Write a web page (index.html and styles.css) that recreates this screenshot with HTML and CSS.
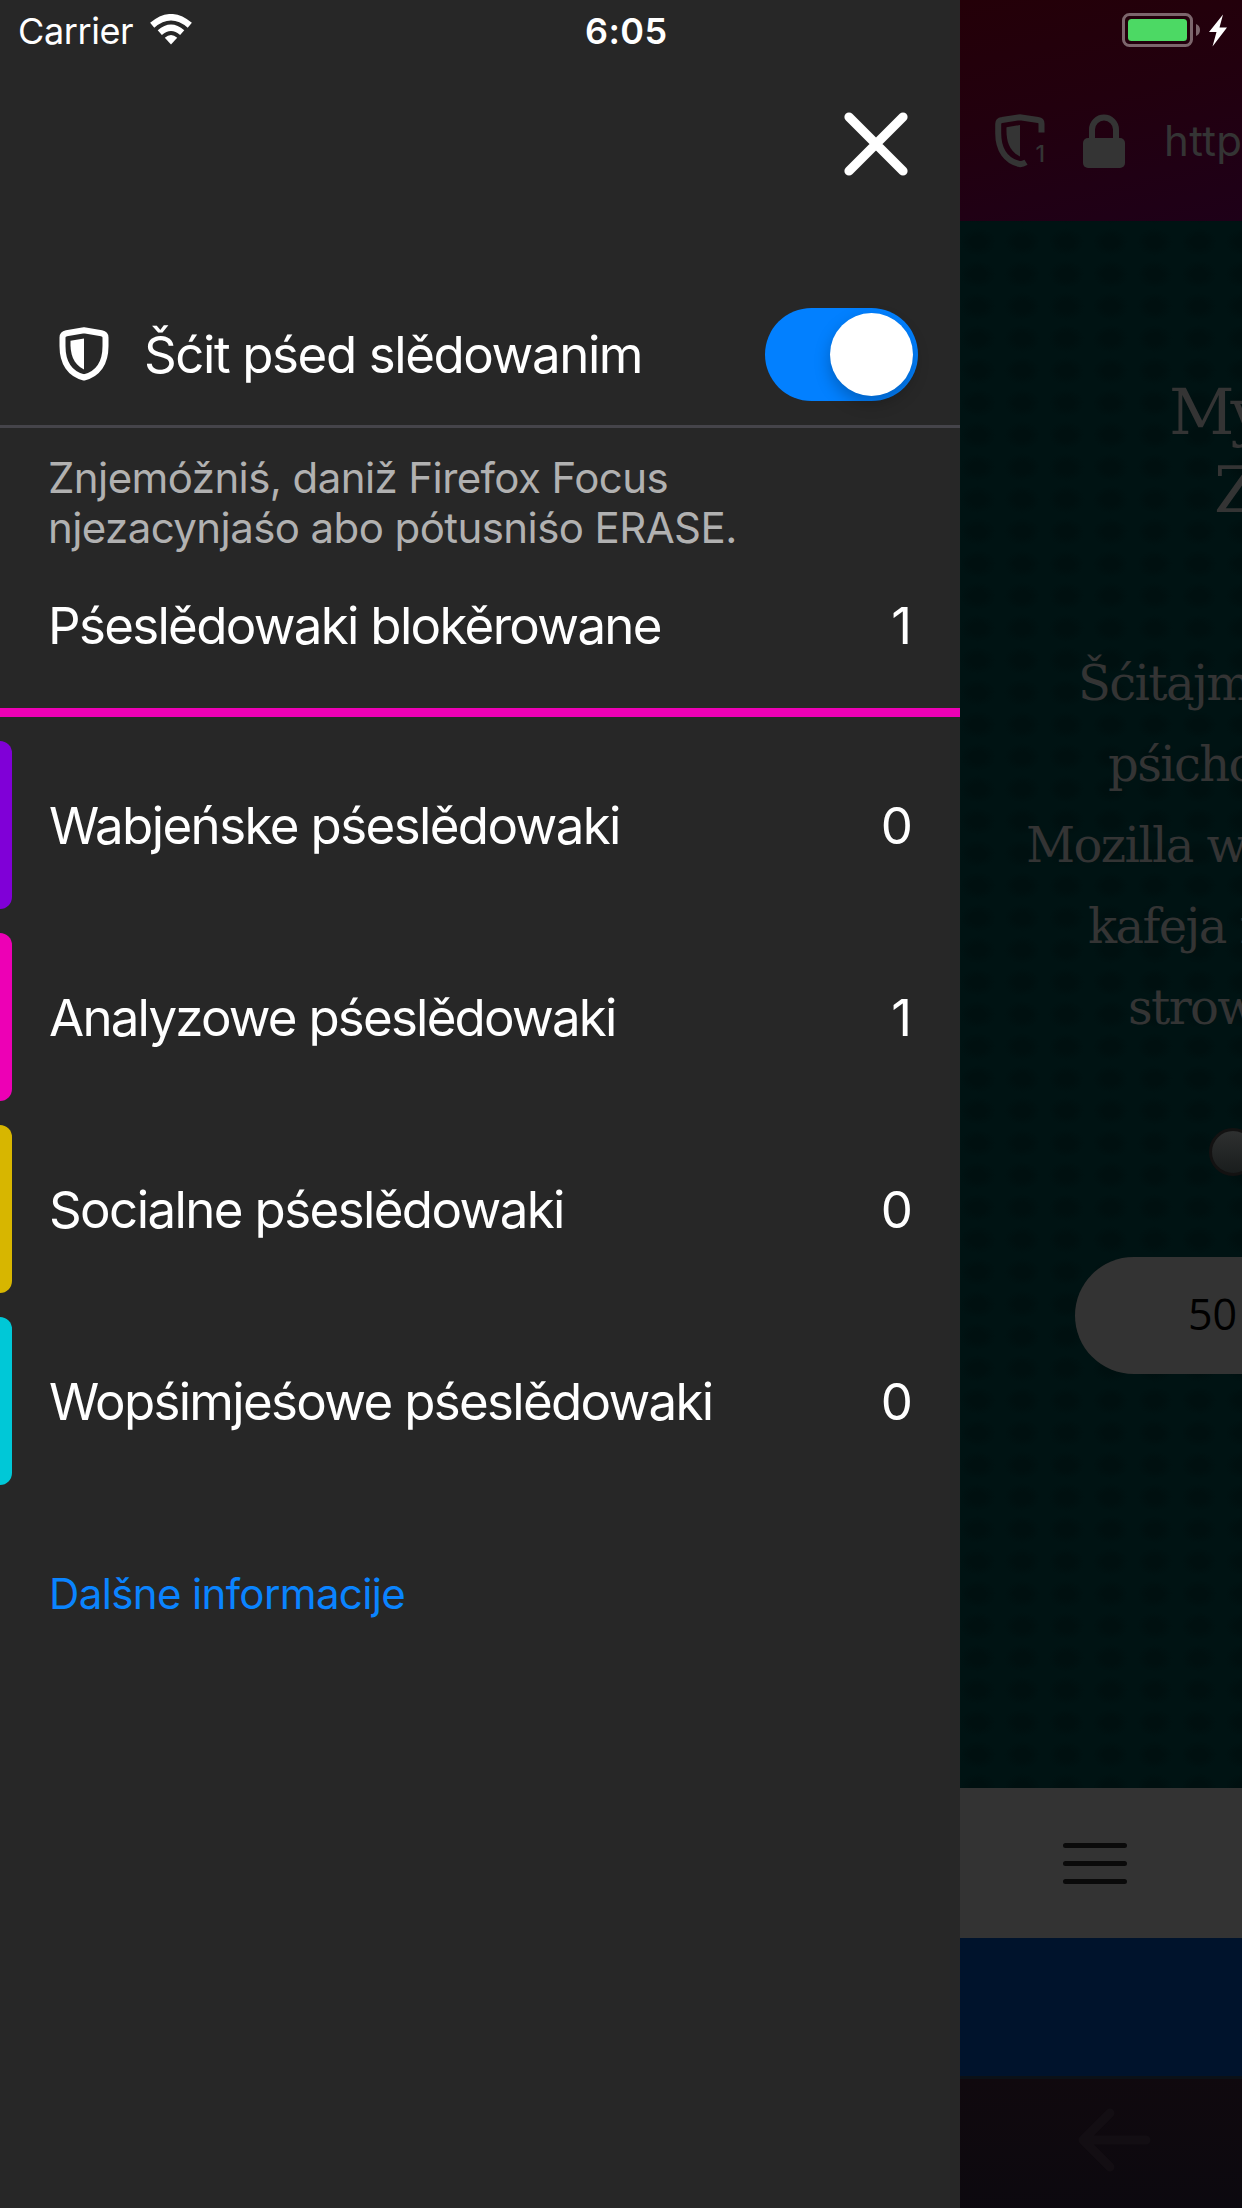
FILE: index.html
```html
<!DOCTYPE html>
<html lang="dsb">
<head>
<meta charset="utf-8">
<title>Firefox Focus</title>
<link rel="stylesheet" href="styles.css">
</head>
<body>
<div class="screen">
  <aside class="drawer">
    <div class="status">
      <span class="carrier">Carrier</span>
      <svg class="wifi" width="42" height="31" viewBox="0 0 42 31" fill="none" stroke="#fff" stroke-width="6.4"><path d="M21 30.500 14.800 23.700Q21 18.300 27.200 23.700Z" fill="#fff" stroke="none"/><path d="M9.800 18.600Q21 9 32.200 18.600"/><path d="M2.200 11.300Q21 -4.800 39.800 11.300"/></svg>
      <span class="time">6:05</span>
    </div>
    <div class="close-row">
      <svg class="close" width="66" height="66" viewBox="0 0 66 66" fill="none" stroke="#fff" stroke-width="9.2" stroke-linecap="round"><path d="M6 6 60 60M60 6 6 60"/></svg>
    </div>
    <div class="toggle-row">
      <svg class="shield" width="50" height="54" viewBox="0 0 50 54"><path d="M25 3.200 42.500 6.200Q46.500 7 46.500 10.500V19C46.500 36 39 47 25 50.500C11 47 3.500 36 3.500 19V10.500Q3.500 7 7.500 6.200Z" fill="none" stroke="#fff" stroke-width="6" stroke-linejoin="round"/><path d="M25 11.500V42.500C14 37 11 27 11.500 13.700Z" fill="#fff"/></svg>
      <span class="toggle-label">Šćit pśed slědowanim</span>
      <span class="switch"><span class="knob"></span></span>
    </div>
    <p class="hint">Znjemóžniś, daniž Firefox Focus<br>njezacynjaśo abo pótusniśo ERASE.</p>
    <div class="total"><span class="name">Pśeslědowaki blokěrowane</span><span class="one">1</span></div>
    <div class="bar"></div>
    <ul class="list">
      <li class="item ads"><span class="name">Wabjeńske pśeslědowaki</span><span>0</span></li>
      <li class="item analytics"><span class="name">Analyzowe pśeslědowaki</span><span class="one">1</span></li>
      <li class="item social"><span class="name">Socialne pśeslědowaki</span><span>0</span></li>
      <li class="item content"><span class="name">Wopśimjeśowe pśeslědowaki</span><span>0</span></li>
    </ul>
    <a class="more">Dalšne informacije</a>
  </aside>
  <main class="browser">
    <header class="top">
      <div class="battery-row">
        <svg width="106" height="34" viewBox="0 0 106 34"><rect x="1.500" y="1.500" width="68" height="31" rx="6" fill="none" stroke="#7c666c" stroke-width="3"/><rect x="6" y="6" width="59" height="22" rx="3.500" fill="#4cd964"/><path d="M74 11Q78 12.500 78 17T74 23Z" fill="#7c666c"/><path d="M101 1.500 87 19H94.500L90.500 33.500 105 14.500H97.500Z" fill="#fff"/></svg>
      </div>
      <div class="url-row">
        <svg width="52" height="54" viewBox="0 0 52 54"><path d="M46.500 18.500V9.500Q46.500 6.500 43 6L25 3.200 7 6Q3.200 6.500 3.200 10V19C3.200 36 11 47 25 50.200Q28 50 31 48.200" fill="none" stroke="#343434" stroke-width="6"/><path d="M25 11V42.500C14 37 11 27 11.500 13.300Z" fill="#343434"/><text class="count" x="40.500" y="48">1</text></svg>
        <svg width="42" height="54" viewBox="0 0 42 54"><rect y="24" width="42" height="30" rx="5" fill="#343434"/><path d="M9 28V15.500A12 12 0 0 1 33 15.500V28" fill="none" stroke="#343434" stroke-width="6"/></svg>
        <span class="url">http</span>
      </div>
    </header>
    <section class="page">
      <h1 class="headline"><span class="h-first">My</span><span class="h-second">Z</span></h1>
      <p class="copy"><span class="l1">Šćitajm</span><span class="l2">pśicho</span><span class="l3">Mozilla w</span><span class="l4">kafeja n</span><span class="l5">strow</span></p>
      <div class="radio"></div>
      <div class="amount">50</div>
    </section>
    <div class="menu"><svg width="64" height="42" viewBox="0 0 64 42" stroke="#0a0a0a" stroke-width="5" stroke-linecap="round"><path d="M2.500 2.500H61.500M2.500 20.500H61.500M2.500 38.500H61.500"/></svg></div>
    <div class="banner"></div>
    <footer class="nav"><svg width="74" height="64" viewBox="0 0 74 64" fill="none" stroke="#130e13" stroke-width="9" stroke-linecap="round" stroke-linejoin="round"><path d="M68 32H5M32 5 5 32 32 59"/></svg></footer>
  </main>
</div>
</body>
</html>
```
FILE: styles.css
```css
* { box-sizing: border-box; }
body { margin: 0; background: #272727; }
.screen {
  display: flex;
  width: 1242px;
  height: 2208px;
  overflow: hidden;
  font-family: Inter, "Liberation Sans", sans-serif;
  color: #fff;
}
.drawer {
  width: 960px;
  flex: none;
  background: #272727;
  font-size: 51px;
}
.drawer span { white-space: nowrap; }

/* Status bar */
.status {
  display: flex;
  align-items: center;
  height: 62px;
  padding-left: 18px;
}
.carrier { width: 132px; font-size: 36px; letter-spacing: -0.4px; }
.wifi { margin-top: -3px; }
.time { margin-left: 393px; font-size: 36px; font-weight: 600; letter-spacing: 0.4px; }

.close-row { height: 224px; padding: 49px 51px 0 0; }
.close { display: block; margin-left: auto; }

/* Tracking protection switch */
.toggle-row {
  display: flex;
  align-items: center;
  height: 142px;
  padding: 0 42px 3px 59px;
  border-bottom: 3px solid #45444a;
}
.toggle-label { margin-left: 35px; flex: 1; letter-spacing: -1.4px; }
.switch {
  width: 153px;
  height: 93px;
  padding: 5px;
  border-radius: 47px;
  background: #0280ff;
}
.knob {
  display: block;
  width: 83px;
  height: 83px;
  margin-left: 60px;
  border-radius: 50%;
  background: #fff;
  box-shadow: 0 7px 16px rgba(0, 0, 0, 0.25);
}

.hint {
  height: 133px;
  margin: 0;
  padding: 25px 0 0 48px;
  font-size: 42px;
  line-height: 50px;
  letter-spacing: -0.58px;
  white-space: nowrap;
  color: #b1b1b1;
}
.total {
  display: flex;
  align-items: center;
  height: 147px;
  padding: 0 47px 19px 48px;
}
.name { flex: 1; letter-spacing: -1.6px; }
.total .name { letter-spacing: -1.68px; }
.one { margin-right: 1px; }
.bar { height: 9px; background: #ed00b5; }

/* Tracker categories */
.list {
  display: grid;
  grid-auto-rows: 168px;
  gap: 24px;
  margin: 0;
  padding: 24px 0 0;
  list-style: none;
}
.item {
  display: flex;
  align-items: center;
  padding-right: 47px;
}
.item::before {
  content: "";
  width: 12px;
  height: 168px;
  margin-right: 37px;
  border-radius: 0 12px 12px 0;
  background: var(--accent);
}
.ads { --accent: #8000d7; }
.analytics { --accent: #ed00b5; }
.analytics .name { letter-spacing: -1.78px; }
.social { --accent: #d7b600; }
.content { --accent: #00c8d7; }
.content .name { letter-spacing: -1.68px; }
.more {
  display: block;
  margin: 84px 0 0 49px;
  font-size: 42px;
  line-height: 50px;
  letter-spacing: -0.63px;
  color: #0a84ff;
}

/* Dimmed browser */
.browser { width: 282px; flex: none; overflow: hidden; }
.top {
  height: 221px;
  background: linear-gradient(167deg, #240008, #22000e 45%, #200014 75%, #1e0018);
}
.battery-row { height: 114px; padding: 13px 0 0 162px; }
.battery-row svg { display: block; }
.url-row { display: flex; height: 54px; padding-left: 35px; }
.url-row svg, .url { flex: none; }
.url-row svg + svg { margin-left: 36px; }
.count { font: 500 23px Inter, sans-serif; fill: #343434; }
.url { margin-left: 39px; font-size: 42px; line-height: 54px; color: #343434; letter-spacing: 0.3px; }

.page {
  height: 1567px;
  padding-top: 152px;
  background: #001313 radial-gradient(ellipse 18px 14px at center, #001010, #001010 40%, #001313) -4px 5px / 44.2px 32.2px;
  font-family: "DejaVu Serif", serif;
  color: #343434;
}
.headline { margin: 0; font-size: 64px; font-weight: 400; line-height: 78px; letter-spacing: -4px; }
.headline span, .copy span { display: block; white-space: nowrap; }
.h-first { padding-left: 209px; }
.h-second { padding-left: 254px; }
.copy { margin: 0; padding-top: 114px; font-size: 48px; line-height: 81px; letter-spacing: -1.6px; }
.l1 { padding-left: 118px; }
.l2 { padding-left: 148px; }
.l3 { padding-left: 66px; }
.l4 { padding-left: 128px; }
.l5 { padding-left: 168px; }
.radio {
  width: 48px;
  height: 48px;
  margin: 80px 0 0 249px;
  border: 3px solid #131212;
  border-radius: 50%;
  background: linear-gradient(#2e3030, #191d1d);
}
.amount {
  width: 420px;
  height: 117px;
  margin: 81px 0 0 115px;
  padding-left: 113px;
  border-radius: 59px;
  background: #333;
  color: #000;
  font: 43px/114px "Open Sans", sans-serif;
}
.menu { height: 150px; background: #333; padding: 55px 0 0 103px; }
.menu svg { display: block; }
.banner { height: 138px; background: #00132c; }
.nav {
  height: 132px;
  padding: 29px 0 0 118px;
  border-top: 3px solid #0b1117;
  background: linear-gradient(175deg, #10090e, #0c090f);
}
```
